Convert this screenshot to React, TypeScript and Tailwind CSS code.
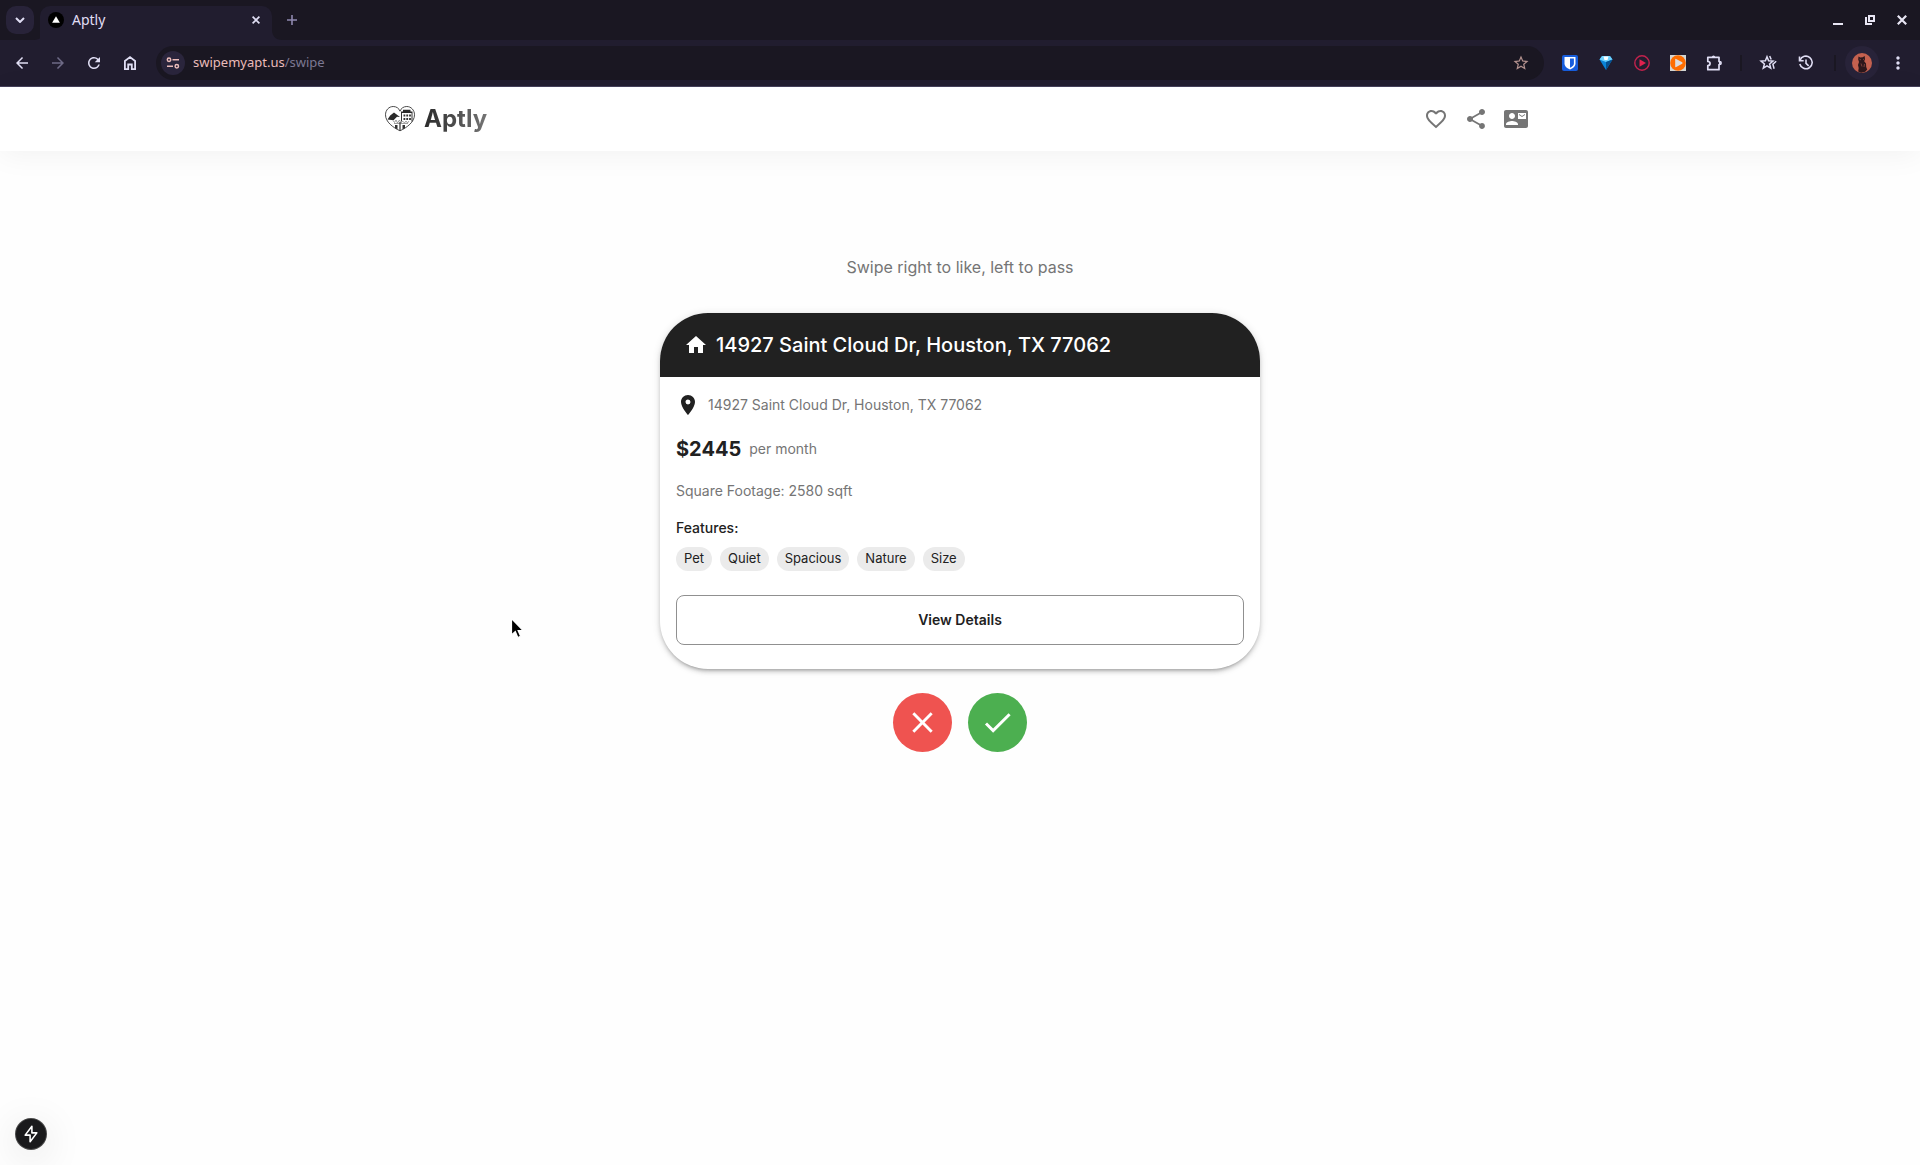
import React, { useState } from 'react';
import {
  MdArrowBack,
  MdArrowForward,
  MdCheck,
  MdClose,
  MdContactMail,
  MdFavoriteBorder,
  MdHome,
  MdLocationOn,
  MdMoreVert,
  MdRefresh,
  MdShare,
  MdStarBorder,
} from 'react-icons/md';

const listing = {
  address: '14927 Saint Cloud Dr, Houston, TX 77062',
  price: 2445,
  sqft: 2580,
  features: ['Pet', 'Quiet', 'Spacious', 'Nature', 'Size'],
};

function ToolbarButton({ label, children }: { label: string; children: React.ReactNode }) {
  return (
    <button aria-label={label} className="flex h-9 w-9 shrink-0 items-center justify-center">
      {children}
    </button>
  );
}

function TabStrip() {
  return (
    <div className="flex h-10 items-end bg-[#1a1722]">
      <button
        aria-label="Search tabs"
        className="mb-1.5 ml-1.5 flex h-7 w-7 shrink-0 items-center justify-center rounded-[10px] bg-[#282339] text-[#e0def4]"
      >
        <svg width="10" height="6" viewBox="0 0 10 6" fill="none" stroke="currentColor" strokeWidth="2">
          <path d="M1 1l4 4 4-4" />
        </svg>
      </button>
      <svg width="10" height="10" viewBox="0 0 10 10" className="-mr-1 shrink-0 text-[#211d2f]" fill="currentColor">
        <path d="M10 0v10H0C6 10 10 6 10 0z" />
      </svg>
      <div className="flex h-[34px] w-58 items-center rounded-t-[10px] bg-[#211d2f] pb-1.5 pl-2 text-[#e0def4]">
        <svg width="16" height="16" viewBox="0 0 16 16">
          <circle cx="8" cy="8" r="8" fill="#000" />
          <path d="M8 4.2l3.9 6.6H4.1z" fill="#fff" />
        </svg>
        <span className="ml-2 flex-1 text-sm">Aptly</span>
        <button aria-label="Close tab" className="mr-2 flex h-4 w-4 items-center justify-center">
          <svg width="8" height="8" viewBox="0 0 8 8" stroke="currentColor" strokeWidth="1.7">
            <path d="M.6.6l6.8 6.8M7.4.6L.6 7.4" />
          </svg>
        </button>
      </div>
      <svg width="10" height="10" viewBox="0 0 10 10" className="shrink-0 text-[#211d2f]" fill="currentColor">
        <path d="M0 0v10h10C4 10 0 6 0 0z" />
      </svg>
      <button aria-label="New tab" className="mb-1.5 flex h-7 w-5 items-center justify-center text-[#8f89b0]">
        <svg width="10" height="10" viewBox="0 0 10 10" stroke="currentColor" strokeWidth="1.6">
          <path d="M5 0v10M0 5h10" />
        </svg>
      </button>
      <div className="ml-auto flex h-10 pr-0.5 text-[#e8e6f4]">
        <button aria-label="Minimize" className="flex w-8 items-center justify-center">
          <svg width="10" height="10" viewBox="0 0 10 10" fill="currentColor">
            <path d="M0 8h10v2H0z" />
          </svg>
        </button>
        <button aria-label="Restore" className="flex w-8 items-center justify-center">
          <svg width="10" height="10" viewBox="0 0 10 10" fill="none" stroke="currentColor" strokeWidth="2">
            <path d="M4 1h5v5H4z" />
            <path d="M1 2v7h6" />
          </svg>
        </button>
        <button aria-label="Close" className="flex w-8 items-center justify-center">
          <svg width="10" height="10" viewBox="0 0 10 10" stroke="currentColor" strokeWidth="2.2">
            <path d="M.8.8l8.4 8.4M9.2.8L.8 9.2" />
          </svg>
        </button>
      </div>
    </div>
  );
}

function Extensions() {
  return (
    <>
      <ToolbarButton label="Password manager">
        <svg width="16" height="16" viewBox="0 0 16 16">
          <rect width="16" height="16" rx="2" fill="#175ddc" />
          <path d="M2.500 2h11v6.500c0 3-2.900 5-5.500 6-2.600-1-5.500-3-5.500-6z" fill="#fff" />
          <path d="M8 3.500h3.900v5c0 2-1.900 3.400-3.900 4.300z" fill="#175ddc" />
        </svg>
      </ToolbarButton>
      <ToolbarButton label="Gem">
        <svg width="16" height="16" viewBox="0 0 16 16">
          <path d="M4 1h8l2.500 3.500L8 15 1.500 4.500z" fill="#0a84d8" />
          <path d="M4 1h8l2.500 3.500L8 7 1.500 4.500z" fill="#6fd3ff" />
          <path d="M5.500 1.500h5l-1 3.500h-3z" fill="#fff" />
          <path d="M8 7l6.500-2.500L8 15z" fill="#05508f" />
        </svg>
      </ToolbarButton>
      <ToolbarButton label="Player">
        <svg width="16" height="16" viewBox="0 0 16 16">
          <circle cx="8" cy="8" r="7.200" fill="none" stroke="#c2224d" strokeWidth="1.400" />
          <path d="M5.500 4.200L12 8l-6.500 3.800z" fill="#e0214f" />
        </svg>
      </ToolbarButton>
      <ToolbarButton label="Video">
        <svg width="16" height="16" viewBox="0 0 16 16">
          <rect width="16" height="16" fill="#d3d6d4" />
          <circle cx="8" cy="8" r="7.800" fill="#ff6d00" />
          <path d="M5.200 4.500q0-1 1-.5l6 3.300q.9.700 0 1.400l-6 3.300q-1 .5-1-.5z" fill="#dcdcdc" />
        </svg>
      </ToolbarButton>
      <ToolbarButton label="Extensions">
        <svg width="18" height="18" viewBox="0 0 18 18" fill="none" stroke="currentColor" strokeWidth="1.700">
          <path d="M2.800 3.300H14v4.200h.6a1.500 1.500 0 0 1 0 3H14v5.200H2.800v-4.200c3 0 3-4 0-4z" strokeLinejoin="round" />
          <path d="M6.800 3.200a1.700 1.700 0 0 1 3.400 0z" fill="currentColor" stroke="none" />
          <path d="M14 7.300a1.700 1.700 0 0 1 0 3.400z" fill="currentColor" stroke="none" />
        </svg>
      </ToolbarButton>
    </>
  );
}

function Toolbar() {
  return (
    <div className="flex h-[47px] items-center border-b border-[#45405a] bg-[#211d2f] px-1 text-[#e0def4]">
      <ToolbarButton label="Back">
        <MdArrowBack size={18} />
      </ToolbarButton>
      <ToolbarButton label="Forward">
        <MdArrowForward size={18} className="text-[#6e6a86]" />
      </ToolbarButton>
      <ToolbarButton label="Reload">
        <MdRefresh size={18} />
      </ToolbarButton>
      <ToolbarButton label="Home">
        <svg width="14" height="16" viewBox="0 0 14 16" fill="none" stroke="currentColor" strokeWidth="1.800">
          <path d="M1.900 6L7 2.100 12.100 6v8.100H8.800V9.500H5.200v4.600H1.900z" />
        </svg>
      </ToolbarButton>
      <div className="mx-2 flex h-[34px] flex-1 items-center rounded-full bg-[#1a1722] pl-[5px] pr-[14px]">
        <button
          aria-label="View site information"
          className="flex h-6 w-6 shrink-0 items-center justify-center rounded-full bg-[#2a253c] text-[#ebbcba]"
        >
          <svg width="14" height="12" viewBox="0 0 14 12" fill="none" stroke="currentColor" strokeWidth="1.500">
            <circle cx="3" cy="2.700" r="1.700" />
            <path d="M6.500 2.700H13M1 9.300h6" />
            <circle cx="10.800" cy="9.300" r="1.700" />
          </svg>
        </button>
        <a href="#swipe" className="ml-2 flex-1 text-[13px] text-[#7c7893]">
          <span className="text-[#ebbcba]">swipemyapt.us</span>/swipe
        </a>
        <button aria-label="Bookmark this tab" className="text-[#b4928f]">
          <MdStarBorder size={18} />
        </button>
      </div>
      <Extensions />
      <div className="mx-2 h-4 w-0.5 bg-[#1a1722]" />
      <div className="flex gap-0.5">
        <ToolbarButton label="Bookmarks">
          <svg width="18" height="18" viewBox="0 0 18 18" fill="none" stroke="currentColor" strokeWidth="1.500">
            <path d="M8 2.800l1.600 4 4.300.3-3.300 2.800 1.100 4.200L8 11.800l-3.700 2.300 1.100-4.200L2.100 7.100l4.300-.3z" />
            <path d="M10.700 2l1.500 3.500M17.200 7.200l-3.300 3 1.200 4.600" />
          </svg>
        </ToolbarButton>
        <ToolbarButton label="History">
          <svg width="16" height="16" viewBox="0 0 16 16" fill="none" stroke="currentColor" strokeWidth="1.600">
            <path d="M2 5.200A6.300 6.300 0 1 1 1.800 9" />
            <path d="M1.500 1.500v4.200h4.200M8 4.500v3.800l2.700 2.500" />
          </svg>
        </ToolbarButton>
      </div>
      <div className="mr-2 ml-2.5 h-4 w-0.5 bg-[#1a1722]" />
      <ToolbarButton label="Profile">
        <span className="flex h-[34px] w-[34px] items-center justify-center rounded-full bg-[#282339]">
          <svg width="20" height="20" viewBox="0 0 20 20">
            <circle cx="10" cy="10" r="10" fill="#c4614f" />
            <path
              d="M6.500 3.500l1.700 1 2.500-.2 2-1.300.3 3.200-.8 2 1.800 2.300.2 3.500 1 2.500-2 2.200-4 1-3-1.200.5-3.500-.7-3 1-3-.8-2.500z"
              fill="#2c171b"
            />
            <path d="M7.500 6.200l1.500.7M12 6l-1 .7M9 10.500l1 3M12.500 11l-.5 3" stroke="#8d4a42" strokeWidth=".8" />
          </svg>
        </span>
      </ToolbarButton>
      <ToolbarButton label="Menu">
        <MdMoreVert size={20} />
      </ToolbarButton>
    </div>
  );
}

function Logo() {
  return (
    <svg width="32" height="32" viewBox="0 0 32 32" fill="none">
      <path
        d="M16 27.800C9 24.500 1.500 19 1.500 11.800 1.500 7 5 3.500 9.200 3.500c3.200 0 5.800 1.800 6.800 4.700 1-2.900 3.600-4.700 6.800-4.700 4.200 0 7.700 3.500 7.700 8.300 0 7.200-7.500 12.700-14.500 16z"
        stroke="#4a4a4a"
      />
      <path d="M3.500 16.500l2.700-4L10 9.500l6 4.500-3-.3-3.500 3.500z" fill="#2a2a2a" />
      <path d="M17 8.500h2V6.800h7.500v1.700h2V10H17z" fill="#2a2a2a" />
      <path d="M17.500 10v8.500M28 10v8.500" stroke="#333" />
      <path d="M19.500 11.500h1.800v2h-1.800zM22.300 11.500h1.800v2h-1.800zM25.100 11.500h1.800v2h-1.800zM19.500 15h1.800v2h-1.800zM22.300 15h1.800v2h-1.800zM25.100 15h1.800v2h-1.800z" fill="#333" />
      <path
        d="M9 17.500l1.500 2L12 17l1.500 3 2-3 1.500 3 1.500-2 2 2 1.500-2 1.500 2 1.500-2M10 20.500h14"
        stroke="#888"
        strokeWidth=".8"
      />
      <path d="M11 22h2.500v4.500L11 25zM18.500 22H21v3l-2.500 1.500z" fill="#333" />
      <path d="M16 19v8.500" stroke="#333" strokeWidth="1.200" />
    </svg>
  );
}

function SiteHeader() {
  return (
    <header className="relative bg-white shadow-[0_4px_30px_rgba(0,0,0,0.05)]">
      <div className="mx-auto flex h-16 max-w-[1200px] items-center px-6">
        <a href="#home" className="flex items-center gap-2">
          <Logo />
          <span className="bg-linear-to-r from-[#2b2b2b] to-[#757575] bg-clip-text text-2xl font-bold text-transparent">
            Aptly
          </span>
        </a>
        <nav className="ml-auto flex text-[#757575]">
          <button aria-label="Liked" className="p-2">
            <MdFavoriteBorder size={24} />
          </button>
          <button aria-label="Share" className="p-2">
            <MdShare size={24} />
          </button>
          <button aria-label="Contact" className="p-2">
            <MdContactMail size={24} />
          </button>
        </nav>
      </div>
    </header>
  );
}

function ListingCard() {
  return (
    <article className="w-full max-w-[600px] overflow-hidden rounded-[48px] bg-white text-[#212121] shadow-[0_3px_3px_-2px_rgba(0,0,0,0.2),0_3px_4px_0_rgba(0,0,0,0.14),0_1px_8px_0_rgba(0,0,0,0.12)]">
      <div className="flex h-16 items-center gap-2 bg-[#212121] px-6 text-white">
        <MdHome size={24} />
        <h2 className="text-xl font-medium">{listing.address}</h2>
      </div>
      <div className="px-4 pt-4 pb-6">
        <div className="flex items-center gap-2">
          <MdLocationOn size={24} />
          <span className="text-sm text-[#757575]">{listing.address}</span>
        </div>
        <div className="mt-4 flex h-8 items-center gap-2">
          <span className="text-xl font-bold">${listing.price}</span>
          <span className="text-sm text-[#757575]">per month</span>
        </div>
        <p className="mt-4 text-sm text-[#757575]">Square Footage: {listing.sqft} sqft</p>
        <h3 className="mt-4 text-sm/[22px] font-medium">Features:</h3>
        <ul className="mt-2 flex flex-wrap gap-2">
          {listing.features.map((feature) => (
            <li key={feature} className="flex h-6 items-center rounded-full bg-[#ebebeb] px-2 text-[13px]">
              {feature}
            </li>
          ))}
        </ul>
        <button className="mt-6 h-[50px] w-full rounded-lg border border-[#909090] text-sm font-semibold">
          View Details
        </button>
      </div>
    </article>
  );
}

export default function App() {
  const [, setLiked] = useState<boolean | null>(null);

  return (
    <div className="relative flex min-h-screen flex-col bg-[#fefefe] font-['Inter',sans-serif]">
      <div className="font-['Noto_Sans',sans-serif]">
        <TabStrip />
        <Toolbar />
      </div>
      <SiteHeader />
      <main className="flex flex-1 flex-col items-center pt-[102px]">
        <p className="mb-8 text-base/7 text-[#757575]">Swipe right to like, left to pass</p>
        <ListingCard />
        <div className="mt-6 flex gap-4 text-white">
          <button
            aria-label="Pass"
            onClick={() => setLiked(false)}
            className="rounded-full bg-[#ef5350] p-3"
          >
            <MdClose size={35} />
          </button>
          <button
            aria-label="Like"
            onClick={() => setLiked(true)}
            className="rounded-full bg-[#4caf50] p-3"
          >
            <MdCheck size={35} />
          </button>
        </div>
      </main>

      {/* Dev tools badge */}
      <button
        aria-label="Open dev tools"
        className="absolute bottom-4 left-4 flex h-[30px] w-[30px] items-center justify-center rounded-full bg-[#1a1a1c] text-white shadow-[0_0_0_1px_#4a4a4a,0_8px_40px_rgba(0,0,0,0.14)]"
      >
        <svg width="18" height="18" viewBox="0 0 16 16" fill="none" stroke="currentColor" strokeWidth="1.400">
          <path d="M8.800 1.200L2.800 9h4.400v5.800L13.200 7H8.800z" strokeLinejoin="round" />
        </svg>
      </button>

      {/* Pointer */}
      <svg width="16" height="24" viewBox="0 0 16 24" className="absolute top-[617px] left-[510px]">
        <path
          d="M1.500 1.500v16.500l3.800-3.500 2.500 6 2.800-1.200-2.500-5.800h5z"
          fill="#000"
          stroke="#fff"
          strokeWidth="1.200"
        />
      </svg>
    </div>
  );
}
